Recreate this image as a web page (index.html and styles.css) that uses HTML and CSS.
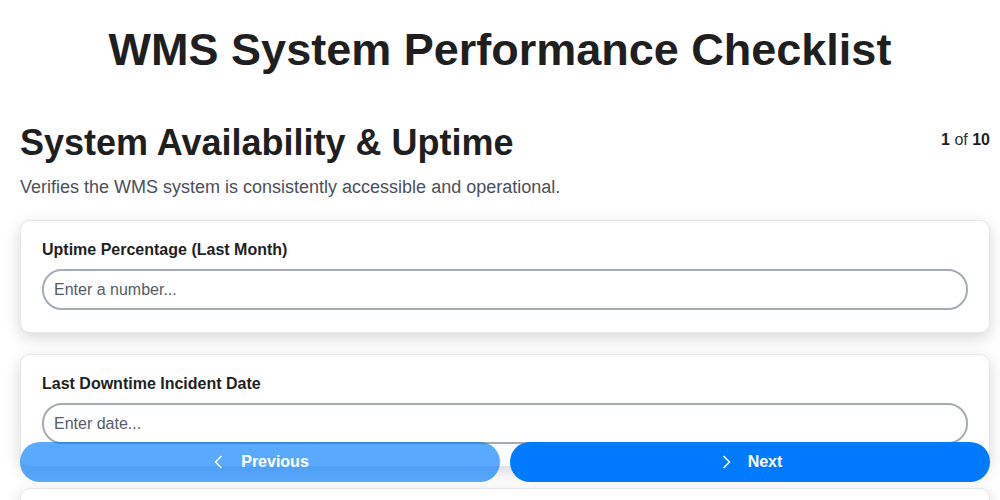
FILE: index.html
```html
<!DOCTYPE html>
<html>
<head>
	<title>WMS System Performance Checklist</title>
	<link rel="stylesheet" href="styles.css">
</head>
<body>
	<h1 class="title">WMS System Performance Checklist</h1>

	<div class="section-head">
		<h2>System Availability &amp; Uptime</h2>
		<div class="counter"><b>1</b> of <b>10</b></div>
	</div>
	<p class="desc">Verifies the WMS system is consistently accessible and operational.</p>

	<div class="card">
		<label>Uptime Percentage (Last Month)</label>
		<input type="text" placeholder="Enter a number...">
	</div>
	<div class="card">
		<label>Last Downtime Incident Date</label>
		<input type="text" placeholder="Enter date...">
	</div>
	<div class="card">
		<label>Average Response Time (ms)</label>
		<input type="text" placeholder="Enter a number...">
	</div>

	<div class="nav">
		<button class="btn prev" disabled>
			<svg width="16" height="16" viewBox="0 0 16 16"><path d="M10.5 2 L4.5 8 L10.5 14" fill="none" stroke="#fff" stroke-width="1.6"/></svg>
			Previous
		</button>
		<button class="btn next">
			<svg width="16" height="16" viewBox="0 0 16 16"><path d="M5.5 2 L11.5 8 L5.5 14" fill="none" stroke="#fff" stroke-width="1.6"/></svg>
			Next
		</button>
	</div>
</body>
</html>
```

FILE: styles.css
```css
*{box-sizing:border-box;}
body{margin:0; padding:0 10px 0 20px; font-family:"Liberation Sans", Arial, sans-serif; color:#1f1f1f; background:#fff;}
.title{font-size:45px; text-align:center; margin:25px 0 0; line-height:50px; padding-right:10px;}
.section-head{display:flex; justify-content:space-between; align-items:flex-start; margin-top:45px;}
.section-head h2{font-size:36px; margin:0; line-height:46px;}
.counter{font-size:16px; color:#333; margin-top:11px;}
.counter b{color:#1f1f1f;}
.desc{font-size:18px; color:#4a4f5a; margin:10px 0 22px; line-height:22px;}
.card{border:1px solid #e5e7eb; border-radius:10px; padding:19px 21px 22px; margin-bottom:21px; box-shadow:0 5px 16px rgba(0,0,0,0.16); background:#fff;}
.card label{display:block; font-size:16px; font-weight:bold; line-height:20px; margin-bottom:9px;}
.card input{display:block; width:100%; height:41px; border:2px solid #a6acb5; border-radius:20px; padding:0 10px; font-family:inherit; font-size:16px; color:#333; background:#fff;}
.card input::placeholder{color:#555c68;}
.nav{position:fixed; left:20px; right:10px; bottom:18px; display:flex; gap:10px;}
.btn{flex:1; height:40px; border:none; border-radius:20px; background:#007bff; color:#fff; font-family:inherit; font-size:16px; font-weight:bold; display:flex; align-items:center; justify-content:center; gap:14px;}
.btn svg{display:block;}
.prev{opacity:0.65;}
```
